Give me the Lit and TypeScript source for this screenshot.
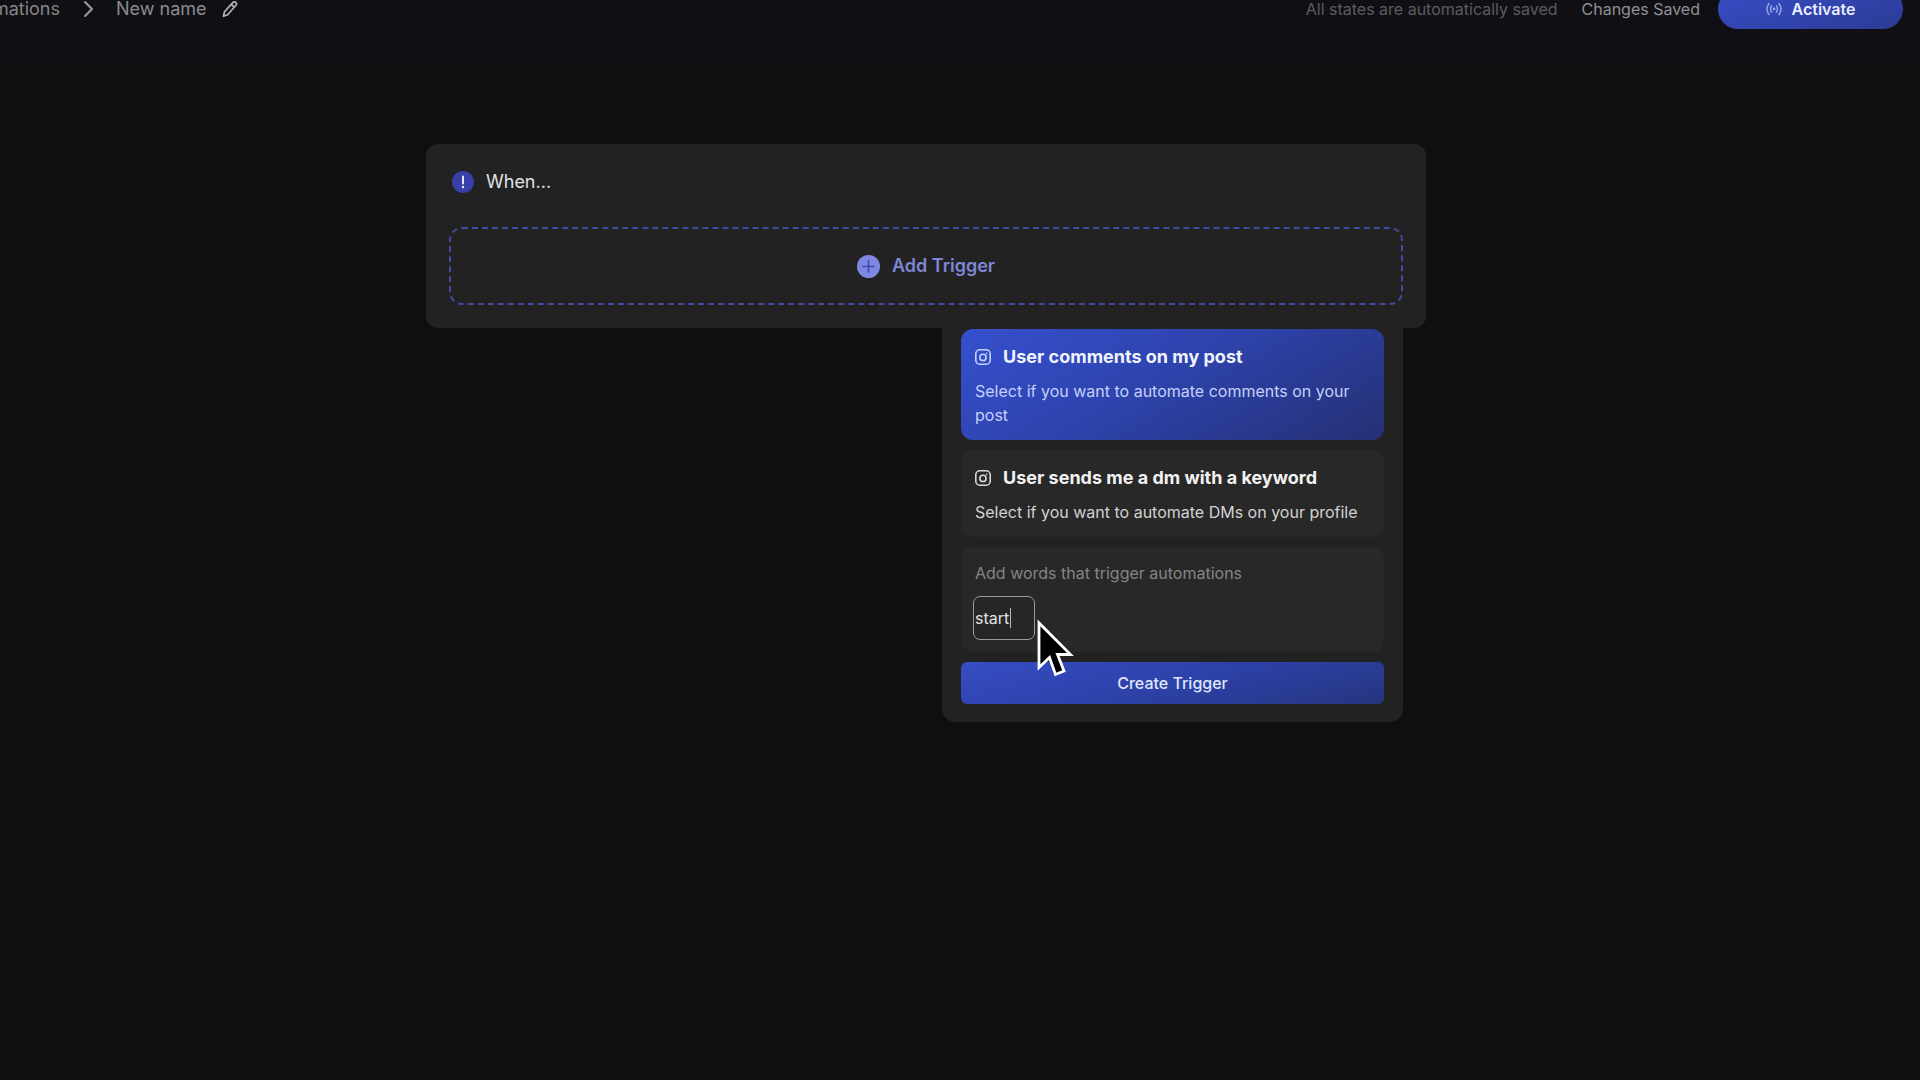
import { LitElement, html, css } from "lit";
import { customElement, property, state } from "lit/decorators.js";
import { classMap } from "lit/directives/class-map.js";

const instagramIcon = html`
  <svg class="icon" viewBox="0 0 16 16" width="16" height="16" fill="none" stroke="currentColor" aria-hidden="true">
    <rect x="0.8" y="0.8" width="14.4" height="14.4" rx="4" stroke-width="1.6" />
    <circle cx="8" cy="8.4" r="3.1" stroke-width="1.6" />
    <circle cx="11.6" cy="4.4" r="0.8" fill="currentColor" stroke="none" />
  </svg>
`;

interface TriggerOption {
  id: string;
  label: string;
  description: string;
}

const TRIGGERS: TriggerOption[] = [
  {
    id: "comment",
    label: "User comments on my post",
    description: "Select if you want to automate comments on your post",
  },
  {
    id: "dm",
    label: "User sends me a dm with a keyword",
    description: "Select if you want to automate DMs on your profile",
  },
];

@customElement("automation-header")
class AutomationHeader extends LitElement {
  static styles = css`
    :host {
      display: flex;
      align-items: center;
      justify-content: space-between;
      height: 40px;
      margin-top: -11px;
      padding: 0 17px 34px 0;
      background: #101014;
      color: #9b9ba0;
      font-size: 18px;
      line-height: 24px;
    }
    .crumbs,
    .status {
      display: flex;
      align-items: center;
    }
    .parent {
      display: flex;
      justify-content: flex-end;
      width: 60px;
      overflow: hidden;
      color: #85858a;
      text-decoration: none;
    }
    .chevron {
      margin: 0 22px 0 23px;
    }
    .name {
      color: #8b8b90;
    }
    .edit {
      display: flex;
      margin: 0 0 0 15px;
      padding: 0;
      border: 0;
      background: none;
      color: #b4b4b8;
    }
    .status {
      font-size: 16px;
    }
    .hint {
      color: #5c5c61;
      margin-right: 24px;
    }
    .saved {
      color: #8f8f94;
      margin-right: 18px;
    }
    .activate {
      display: flex;
      align-items: center;
      justify-content: center;
      gap: 10px;
      width: 185px;
      height: 40px;
      padding: 0;
      border: 0;
      border-radius: 20px;
      background: linear-gradient(160deg, #374dc6, #2c3b96);
      color: #e8ecff;
      font: 600 16px/24px var(--ui-font);
    }
    .activate svg {
      color: #98a5ee;
    }
  `;

  render() {
    return html`
      <nav class="crumbs" aria-label="Breadcrumb">
        <a class="parent" href="#automations">Automations</a>
        <svg class="chevron" width="11" height="18" viewBox="0 0 11 18" fill="none" stroke="currentColor" stroke-width="2" stroke-linecap="round" stroke-linejoin="round" aria-hidden="true">
          <path d="M2 2l7 7-7 7" />
        </svg>
        <span class="name">New name</span>
        <button class="edit" aria-label="Edit name">
          <svg width="16" height="18" viewBox="0 0 16 18" fill="none" stroke="currentColor" stroke-width="1.7" stroke-linejoin="round">
            <path d="M1.5 16.2l1-4.4L10.8 2.6c1-1 2.3-.9 3.1-.1s.8 2-.1 3L5.6 14.7z" />
            <path d="M9.3 4.4l3 2.9" />
          </svg>
        </button>
      </nav>
      <div class="status">
        <span class="hint">All states are automatically saved</span>
        <span class="saved">Changes Saved</span>
        <button class="activate">
          <svg width="16" height="14" viewBox="0 0 16 14" fill="none" stroke="currentColor" stroke-width="1.5" stroke-linecap="round" aria-hidden="true">
            <path d="M3 1.5Q-1 7 3 12.5M13 1.5Q17 7 13 12.5M5.6 3.8Q3.4 7 5.6 10.2M10.4 3.8Q12.6 7 10.4 10.2" />
            <circle cx="8" cy="7" r="0.7" fill="currentColor" />
          </svg>
          Activate
        </button>
      </div>
    `;
  }
}

@customElement("trigger-option")
class TriggerOptionCard extends LitElement {
  @property({ attribute: false }) option!: TriggerOption;
  @property({ type: Boolean }) selected = false;

  static styles = css`
    :host {
      display: block;
    }
    .card {
      display: flex;
      flex-direction: column;
      gap: 10px;
      box-sizing: border-box;
      width: 100%;
      padding: 16px 14px 13px;
      border: 0;
      border-radius: 12px;
      background: #282828;
      color: #f2f2f2;
      font: 400 16px/24px var(--ui-font);
      text-align: left;
    }
    .card.selected {
      background: linear-gradient(150deg, #3650ce, #2e43ad 45%, #253074);
      color: #f0f4ff;
    }
    .title {
      display: flex;
      align-items: center;
      gap: 12px;
      font-size: 18px;
      font-weight: 700;
    }
    .description {
      color: #d2d2d2;
    }
    .selected .description {
      color: #c5d0fb;
    }
    .icon {
      flex: none;
      color: #d8d8d8;
    }
    .selected .icon {
      color: #c5d4fb;
    }
  `;

  render() {
    return html`
      <button class=${classMap({ card: true, selected: this.selected })} aria-pressed=${this.selected}>
        <span class="title">${instagramIcon}${this.option.label}</span>
        <span class="description">${this.option.description}</span>
      </button>
    `;
  }
}

@customElement("keyword-field")
class KeywordField extends LitElement {
  @state() private value = "start";

  static styles = css`
    :host {
      display: flex;
      flex-direction: column;
      align-items: flex-start;
      gap: 10px;
      padding: 13px 12px 12px;
      border-radius: 12px;
      background: #282828;
    }
    .label {
      padding-left: 2px;
      color: #858585;
      font-size: 16px;
      line-height: 26px;
    }
    .field {
      position: relative;
      display: flex;
    }
    .input {
      box-sizing: border-box;
      width: 62px;
      height: 44px;
      padding: 0 1px;
      border: 1px solid #9a9a9a;
      border-radius: 7px;
      outline: none;
      background: #262626;
      color: #e4e4e4;
      font: 400 16px/24px var(--ui-font);
    }
    .caret {
      position: absolute;
      left: 37px;
      top: 12px;
      width: 1px;
      height: 20px;
      background: #b8b8b8;
    }
    .pointer {
      position: absolute;
      left: 64px;
      top: 22px;
    }
  `;

  render() {
    return html`
      <label class="label" for="keyword">Add words that trigger automations</label>
      <div class="field">
        <input
          id="keyword"
          class="input"
          type="text"
          .value=${this.value}
          @input=${(e: Event) => (this.value = (e.target as HTMLInputElement).value)}
        />
        <span class="caret"></span>
        <svg class="pointer" width="40" height="62" viewBox="0 0 40 62" aria-hidden="true">
          <path d="M2 5V49.500L12.500 39.500L18.500 56.500L27 53L20.500 36.500H33.500Z" fill="#000" stroke="#fff" stroke-width="2.800" />
        </svg>
      </div>
    `;
  }
}

@customElement("app-root")
class AppRoot extends LitElement {
  static styles = css`
    :host {
      --ui-font: Inter, "Liberation Sans", sans-serif;
      display: block;
      min-height: 100vh;
      overflow: hidden;
      background: #0f0f11;
      font-family: var(--ui-font);
    }
    .page {
      padding: 81px 68px 0 0;
    }
    .canvas {
      display: flex;
      flex-direction: column;
      max-width: 1000px;
      margin: 0 auto;
    }
    .when {
      display: flex;
      flex-direction: column;
      gap: 32px;
      padding: 25px 23px 23px;
      border-radius: 12px;
      background: #222222;
    }
    .heading {
      display: flex;
      align-items: center;
      gap: 12px;
      margin: 0;
      padding-left: 3px;
      color: #e2e2e2;
      font-size: 18px;
      font-weight: 400;
      line-height: 26px;
    }
    .add {
      display: flex;
      align-items: center;
      justify-content: center;
      gap: 12px;
      height: 78px;
      padding: 0;
      border: 2px dashed #4249a0;
      border-radius: 13px;
      background: none;
      color: #7f86d6;
      font: 600 18px/24px var(--ui-font);
    }
    .panel {
      display: flex;
      flex-direction: column;
      gap: 10px;
      align-self: flex-end;
      box-sizing: border-box;
      width: 461px;
      max-width: 100%;
      margin-right: 23px;
      padding: 1px 19px 18px;
      border-radius: 0 0 13px 13px;
      background: #222222;
    }
    .create {
      height: 42px;
      padding: 0;
      border: 0;
      border-radius: 6px;
      background: linear-gradient(165deg, #364dc4, #2d41a8 50%, #26357f);
      color: #dfe6ff;
      font: 500 16px/24px var(--ui-font);
    }
  `;

  render() {
    return html`
      <automation-header></automation-header>
      <main class="page">
        <div class="canvas">
          <section class="when">
            <h2 class="heading">
              <svg width="22" height="22" viewBox="0 0 22 22" aria-hidden="true">
                <circle cx="11" cy="11" r="11" fill="#373fa8" />
                <path d="M11 5.500v7" stroke="#e6e8ff" stroke-width="2" stroke-linecap="round" />
                <circle cx="11" cy="16" r="1.200" fill="#e6e8ff" />
              </svg>
              When...
            </h2>
            <button class="add">
              <svg width="23" height="23" viewBox="0 0 23 23" aria-hidden="true">
                <circle cx="11.500" cy="11.500" r="11.500" fill="#7e88e2" />
                <path d="M11.500 6v11M6 11.500h11" stroke="#3d49a6" stroke-width="1.600" stroke-linecap="round" />
              </svg>
              Add Trigger
            </button>
          </section>
          <section class="panel" aria-label="Choose a trigger">
            ${TRIGGERS.map(
              (t) => html`<trigger-option .option=${t} ?selected=${t.id === "comment"}></trigger-option>`
            )}
            <keyword-field></keyword-field>
            <button class="create">Create Trigger</button>
          </section>
        </div>
      </main>
    `;
  }
}
